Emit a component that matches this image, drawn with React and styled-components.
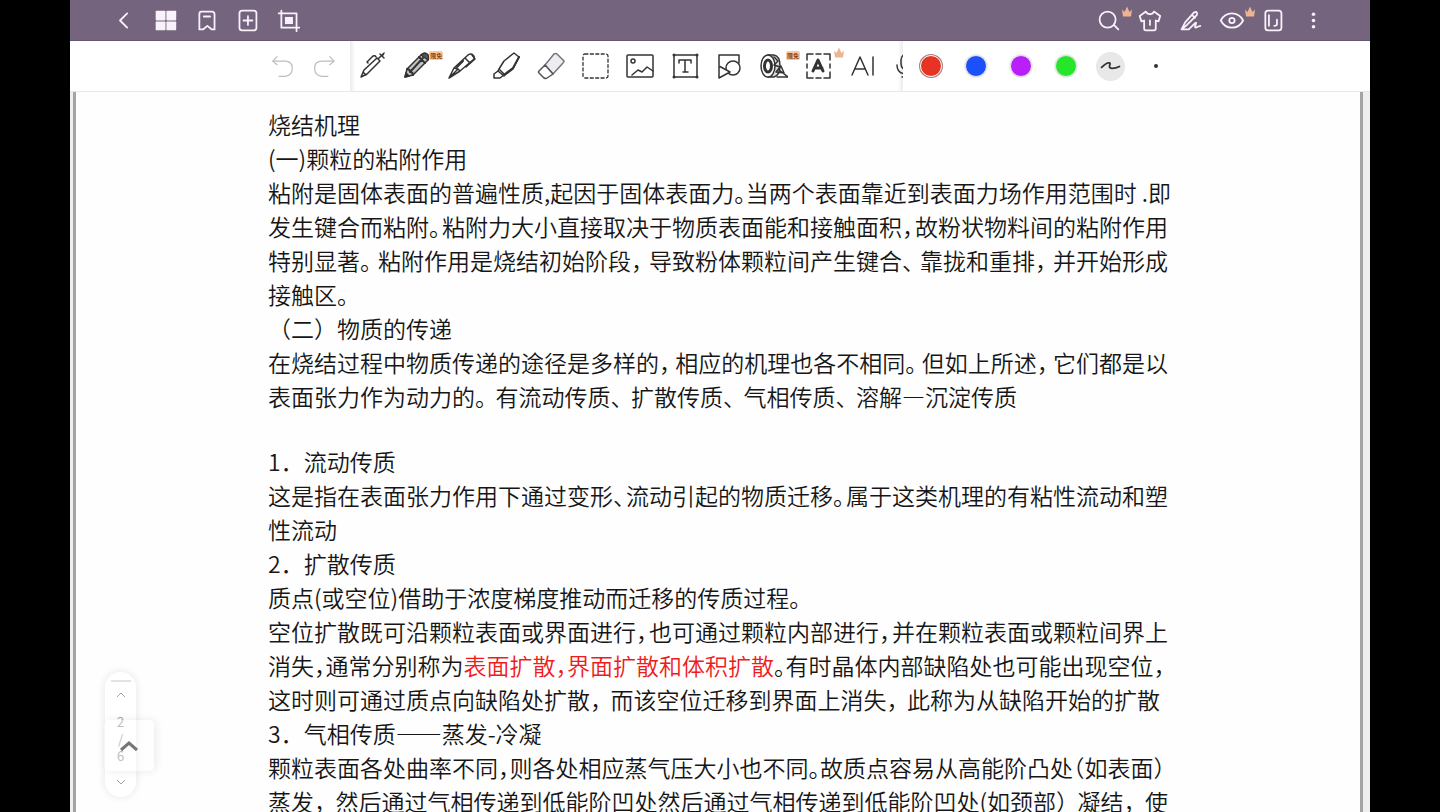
import React, { useState } from "react";
import styled, { createGlobalStyle } from "styled-components";

// *...* marks red text, fit tells how the slack after punctuation is used
const SECTIONS = [
  [
    { text: "烧结机理" },
    { text: "(一)颗粒的粘附作用" },
    { text: "粘附是固体表面的普遍性质,起因于固体表面力。当两个表面靠近到表面力场作用范围时 .即", fit: "full" },
    { text: "发生键合而粘附。粘附力大小直接取决于物质表面能和接触面积，故粉状物料间的粘附作用", fit: "full" },
    { text: "特别显著。粘附作用是烧结初始阶段，导致粉体颗粒间产生键合、靠拢和重排，并开始形成", fit: "full" },
    { text: "接触区。" },
    { text: "（二）物质的传递" },
    { text: "在烧结过程中物质传递的途径是多样的，相应的机理也各不相同。但如上所述，它们都是以", fit: "full" },
    { text: "表面张力作为动力的。有流动传质、扩散传质、气相传质、溶解—沉淀传质", fit: "loose" },
  ],
  [
    { text: "1．流动传质" },
    { text: "这是指在表面张力作用下通过变形、流动引起的物质迁移。属于这类机理的有粘性流动和塑", fit: "full" },
    { text: "性流动" },
    { text: "2．扩散传质" },
    { text: "质点(或空位)借助于浓度梯度推动而迁移的传质过程。" },
    { text: "空位扩散既可沿颗粒表面或界面进行，也可通过颗粒内部进行，并在颗粒表面或颗粒间界上", fit: "full" },
    { text: "消失，通常分别称为*表面扩散，**界面扩散和体积扩散*。有时晶体内部缺陷处也可能出现空位，", fit: "tight" },
    { text: "这时则可通过质点向缺陷处扩散，而该空位迁移到界面上消失，此称为从缺陷开始的扩散", fit: "loose" },
    { text: "3．气相传质——蒸发-冷凝" },
    { text: "颗粒表面各处曲率不同，则各处相应蒸气压大小也不同。故质点容易从高能阶凸处（如表面）", fit: "tight" },
    { text: "蒸发，然后通过气相传递到低能阶凹处然后通过气相传递到低能阶凹处(如颈部）凝结，使", fit: "full" },
  ],
];

const COLORS = [
  { name: "红色", value: "#e73323" },
  { name: "蓝色", value: "#1b50fb" },
  { name: "紫色", value: "#b81ffb" },
  { name: "绿色", value: "#26e52a" },
];

const Crown = () => (
  <CrownMark viewBox="0 0 12 11">
    <path d="M1 3.5 3.5 6 6 .5 8.5 6 11 3.5 10 10.5H2z" fill="#eeb48f" />
  </CrownMark>
);

const leftActions = [
  { label: "返回", icon: <path d="m17 6-8 8 8 8" /> },
  {
    label: "缩略图",
    icon: (
      <g fill="currentColor" stroke="none">
        <rect x="3" y="3" width="11" height="11" rx="1" />
        <rect x="15" y="3" width="11" height="11" rx="1" />
        <rect x="3" y="15" width="11" height="10" rx="1" />
        <rect x="15" y="15" width="11" height="10" rx="1" />
      </g>
    ),
  },
  { label: "书签", icon: <path d="M8 4h12q3 0 3 3v17h-3l-5-4-5 4H6V7q0-3 2-3zM11 9.500h7" /> },
  {
    label: "添加页面",
    icon: (
      <>
        <rect x="5" y="3" width="19" height="22" rx="3" />
        <path d="M14.500 9v10M9.500 14h10" />
      </>
    ),
  },
  {
    label: "裁剪",
    icon: (
      <>
        <path d="M3 6h20v20M6 3v19h20" />
        <rect x="10" y="10" width="9" height="8" fill="currentColor" stroke="none" />
      </>
    ),
  },
];

const rightActions = [
  {
    label: "搜索",
    crown: true,
    icon: (
      <>
        <circle cx="13" cy="13" r="9" />
        <path d="m20 19 5 5" />
      </>
    ),
  },
  {
    label: "主题",
    icon: (
      <>
        <path d="m10 4-7 5 2 6 3-1v9q0 2 2 2h9q2 0 2-2v-9l3 1 2-6-7-5q-1 3-4.500 3T10 4z" />
        <path d="M14.500 14v5" />
      </>
    ),
  },
  {
    label: "手写",
    icon: (
      <>
        <path d="M4 24 8 16 18 5q2-1 3 0t0 3L10 19l-6 5h8l6-6q3-3 2 0l-1 3q0 2 3 0l3-1" />
        <path d="m16 8 3 3" />
      </>
    ),
  },
  {
    label: "阅读模式",
    crown: true,
    icon: (
      <>
        <path d="M2 14q4-8 12.500-8T27 14q-4 8-12.500 8T2 14z" />
        <circle cx="14.500" cy="14" r="3" />
      </>
    ),
  },
  {
    label: "页面",
    icon: (
      <>
        <rect x="6" y="3" width="18" height="22" rx="3" />
        <path d="M10 8v12M19 13v5q0 2-3 2" />
      </>
    ),
  },
  {
    label: "更多",
    icon: (
      <g fill="currentColor" stroke="none">
        <circle cx="14" cy="7" r="2" />
        <circle cx="14" cy="14" r="2" />
        <circle cx="14" cy="21" r="2" />
      </g>
    ),
  },
];

const tools = [
  {
    label: "圆珠笔",
    icon: (
      <>
        <path d="m3 25 3-7L19 6l3 3L9 22zM5 20l3 3M10 11l-1-1 6-6q2-1 3 1M20 7l5-5M22 2l4 4M26 1l-1 2" />
      </>
    ),
  },
  {
    label: "铅笔",
    badge: "限免",
    icon: (
      <>
        <path d="m2 25 2-8L18 3q3-3 6-1t1 6L10 23z" fill="#c4c4c4" />
        <path d="M18 3q3-3 6-1t1 6z" fill="#555" />
        <path d="M4 17q3 0 3 3 3 0 3 3M7 20 20 6M16 5l6 6" strokeWidth="2" />
        <path d="m2 25 1-4 3 3z" fill="#222" />
      </>
    ),
  },
  {
    label: "钢笔",
    icon: (
      <>
        <path d="m1 26 5-10L20 3q3-2 5 0t1 4L12 19zM1 26l9-9M6 16l4 1 2 2M17 6l5 5" />
        <path d="m9 15 6-6" strokeWidth="2" />
        <path d="m18 15 9-8-3-4" />
      </>
    ),
  },
  {
    label: "荧光笔",
    icon: (
      <>
        <path d="m7 17 5-8L22 1l5 4-6 12-8 6zM7 17l-1 2 6 5 1-1M7 17l6 6" />
        <path d="m6 19-4 3v4h6l4-3" />
        <path d="m27 5-6 11-8 6" strokeWidth="2" />
      </>
    ),
  },
  {
    label: "橡皮擦",
    icon: (
      <>
        <path d="m8 13 9-11q2-1 3 0l6 6q2 1 0 3L16 22z" fill="#ececf1" stroke="#777" />
        <path d="m8 13-6 6q-1 1 0 2l5 5q2 1 3 0l6-4z" fill="#fff" stroke="#555" />
      </>
    ),
  },
  { label: "套索", icon: <rect x="2" y="2" width="25" height="24" rx="2" strokeWidth="1.3" strokeDasharray="3 2.400" /> },
  {
    label: "图片",
    icon: (
      <>
        <rect x="1" y="3" width="26" height="22" rx="1" />
        <circle cx="7" cy="9" r="2" />
        <path d="m6 23 6-5 4 2 5-5 6 4" />
      </>
    ),
  },
  {
    label: "文本",
    icon: (
      <>
        <path d="M3 3h23v22H3zM8 11V8h12v3M14 8v12M12 20h5" />
        <g fill="currentColor" stroke="none">
          <circle cx="3" cy="3" r="1.500" />
          <circle cx="26" cy="3" r="1.500" />
          <circle cx="3" cy="25" r="1.500" />
          <circle cx="26" cy="25" r="1.500" />
        </g>
      </>
    ),
  },
  {
    label: "形状",
    icon: (
      <>
        <path d="M4 13V3h20v8" />
        <circle cx="18" cy="16" r="7" />
        <path d="m4 14 11 6-11 6z" fill="#fff" />
      </>
    ),
  },
  {
    label: "胶带",
    badge: "限免",
    icon: (
      <>
        <path d="M8 3h6q6 1 6 11 0 9-6 11H8" fill="#ddd" />
        <ellipse cx="8" cy="14" rx="7" ry="11" fill="#fff" />
        <ellipse cx="8" cy="14" rx="3.500" ry="6" strokeWidth="3" />
        <path d="m14 5 4 4-4 4 6 2-4 5 8 1-3-7M19 18l9 7H17" />
      </>
    ),
  },
  {
    label: "文字识别",
    crown: true,
    icon: (
      <>
        <path d="M3 8V2h6M12 2h5M20 2h6v6M3 12v4M26 12v4M3 20v6h6M12 26h5M20 26h6v-6" />
        <path d="m9 19 5-11 5 11M11 16h7" strokeWidth="3" />
      </>
    ),
  },
  { label: "AI", icon: <path d="m3 23 8-18 8 18M6 17h10M24 5v18" /> },
  {
    label: "录音",
    icon: (
      <>
        <rect x="7" y="2" width="12" height="16" rx="6" />
        <path d="M3 13q0 9 10 9t10-9M13 22v3M8 25h10" />
      </>
    ),
  },
];

const PUNCTUATION = /(?<=[,，。、）])/;

const Line = ({ text, fit }) => {
  const parts = text.split("*");
  return (
    <Row $fit={fit}>
      {parts.map((part, i) =>
        part
          ? part.split(PUNCTUATION).map((piece, j) => (
              <Piece key={`${i}-${j}`} $red={i % 2 === 1}>
                {piece}
              </Piece>
            ))
          : null
      )}
    </Row>
  );
};

const App = () => {
  const [color, setColor] = useState("红色");
  const [page, setPage] = useState(2);

  return (
    <Desk>
      <GlobalStyle />
      <Reader>
        <Header>
          <Actions>
            {leftActions.map(({ label, icon }) => (
              <ActionButton key={label} aria-label={label}>
                <Icon viewBox="0 0 28 28">{icon}</Icon>
              </ActionButton>
            ))}
          </Actions>
          <Actions>
            {rightActions.map(({ label, icon, crown }) => (
              <ActionButton key={label} aria-label={label}>
                <Icon viewBox="0 0 28 28">{icon}</Icon>
                {crown && <Crown />}
              </ActionButton>
            ))}
          </Actions>
        </Header>
        <Toolbar>
          <History>
            <HistoryButton aria-label="撤销">
              <Icon viewBox="0 0 28 28" $thin>
                <path d="m8 3-5 5 5 4M3 8h14q8 0 8 8t-8 9h-7" />
              </Icon>
            </HistoryButton>
            <HistoryButton aria-label="重做">
              <Icon viewBox="0 0 28 28" $thin>
                <path d="m21 3 5 5-5 4M26 8H12q-8 0-8 8t8 9h7" />
              </Icon>
            </HistoryButton>
          </History>
          <Tools>
            <ToolRow>
              {tools.map(({ label, icon, badge, crown }) => (
                <ToolButton key={label} aria-label={label}>
                  <ToolIcon viewBox="0 0 28 28">{icon}</ToolIcon>
                  {badge && <Badge>{badge}</Badge>}
                  {crown && <Crown />}
                </ToolButton>
              ))}
            </ToolRow>
          </Tools>
          <Palette>
            {COLORS.map(({ name, value }) => (
              <PaletteButton key={name} aria-label={name} onClick={() => setColor(name)}>
                <Swatch $color={value} $active={name === color} />
              </PaletteButton>
            ))}
            <PaletteButton aria-label="线条样式">
              <Stroke>
                <Icon viewBox="0 0 28 28">
                  <path d="M4 15q6-6 9-5 1 0 0 3t3 3q4 0 8-2" />
                </Icon>
              </Stroke>
            </PaletteButton>
            <PaletteButton aria-label="粗细">
              <Dot />
            </PaletteButton>
          </Palette>
        </Toolbar>
        <Canvas>
          <Paper>
            <Article lang="zh-CN">
              {SECTIONS.map((lines, i) => (
                <section key={i}>
                  {lines.map((line) => (
                    <Line key={line.text} {...line} />
                  ))}
                </section>
              ))}
            </Article>
          </Paper>
        </Canvas>
        <Pager>
          <Grip />
          <PagerButton aria-label="上一页" onClick={() => setPage(Math.max(1, page - 1))}>
            <Chevron viewBox="0 0 10 6">
              <path d="m1 5 4-4 4 4" />
            </Chevron>
          </PagerButton>
          <Pages>
            <span>{page}</span>
            <span>/</span>
            <span>6</span>
          </Pages>
          <PagerButton aria-label="下一页" onClick={() => setPage(Math.min(6, page + 1))}>
            <Chevron viewBox="0 0 10 6">
              <path d="m1 1 4 4 4-4" />
            </Chevron>
          </PagerButton>
        </Pager>
        <Expand aria-label="展开">
          <svg width="18" height="12" viewBox="0 0 18 12" fill="none" stroke="#777" strokeWidth="3">
            <path d="m1 10 8-7 8 7" />
          </svg>
        </Expand>
      </Reader>
    </Desk>
  );
};

export default App;

const GlobalStyle = createGlobalStyle`
  * {
    box-sizing: border-box;
  }
  body {
    margin: 0;
    background: #000;
    font-family: "Noto Sans CJK SC", sans-serif;
  }
  button {
    padding: 0;
    border: 0;
    background: none;
    color: inherit;
    font: inherit;
    cursor: pointer;
  }
`;

const Desk = styled.div`
  height: 100vh;
  padding: 0 70px;
  background: #000;
  overflow: hidden;
`;

const Reader = styled.div`
  position: relative;
  height: 100%;
  display: flex;
  flex-direction: column;
  background: #fff;
  overflow: hidden;
`;

const Header = styled.header`
  flex: none;
  height: 41px;
  padding: 0 36px 0 34px;
  display: flex;
  justify-content: space-between;
  background: #75647d;
  border-bottom: 1px solid #67566f;
  color: #f8f2fb;
`;

const Actions = styled.div`
  display: flex;
`;

const ActionButton = styled.button`
  position: relative;
  width: 41px;
  height: 40px;
  display: flex;
  align-items: center;
  justify-content: center;
`;

const Icon = styled.svg`
  width: 25px;
  height: 25px;
  fill: none;
  stroke: currentColor;
  stroke-width: ${({ $thin }) => ($thin ? 1.3 : 2)};
  stroke-linecap: round;
  stroke-linejoin: round;
`;

const CrownMark = styled.svg`
  position: absolute;
  top: 6px;
  right: -4px;
  width: 12px;
  height: 11px;
`;

const Toolbar = styled.div`
  flex: none;
  height: 51px;
  display: flex;
  background: #fff;
  border-bottom: 1px solid #e8e8e8;
`;

const History = styled.div`
  width: 280px;
  padding-right: 6px;
  display: flex;
  justify-content: flex-end;
  align-items: center;
  color: #bdbdbd;
`;

const HistoryButton = styled.button`
  width: 41px;
  height: 40px;
  display: flex;
  align-items: center;
  justify-content: center;
`;

const Tools = styled.div`
  flex: 1;
  min-width: 0;
  overflow: hidden;
  box-shadow: inset 5px 0 3px -2px #eee, inset -5px 0 3px -2px #eee;
`;

const ToolRow = styled.div`
  width: calc(100% + 27px);
  height: 50px;
  display: flex;
  color: #333;
`;

const ToolButton = styled.button`
  position: relative;
  flex: 1;
  display: flex;
  align-items: center;
  justify-content: center;
`;

const ToolIcon = styled(Icon)`
  width: 28px;
  height: 28px;
  stroke-width: 1.5;
`;

const Badge = styled.span`
  position: absolute;
  top: 10px;
  right: -4px;
  padding: 0 1px;
  border-radius: 2px;
  background: #fbc9a0;
  color: #8a3f0c;
  font-size: 6px;
  font-weight: 700;
  line-height: 9px;
`;

const Palette = styled.div`
  width: 467px;
  padding-left: 5px;
  display: flex;
  align-items: center;
`;

const PaletteButton = styled.button`
  width: 45px;
  height: 50px;
  display: flex;
  align-items: center;
  justify-content: center;
`;

const Swatch = styled.span`
  width: 22px;
  height: 22px;
  border: 1px solid ${({ $active }) => ($active ? "#fff" : "#e6e6e6")};
  border-radius: 50%;
  background: ${({ $color }) => $color};
  box-shadow: 0 0 0 1px ${({ $active }) => ($active ? "#a97f7b" : "#ededed")};
`;

const Stroke = styled.span`
  width: 29px;
  height: 29px;
  display: flex;
  align-items: center;
  justify-content: center;
  border-radius: 50%;
  background: #e8e8e8;
  color: #333;
`;

const Dot = styled.span`
  width: 4px;
  height: 4px;
  border-radius: 50%;
  background: #333;
`;

const Canvas = styled.main`
  flex: 1;
  min-height: 0;
  padding: 0 7px 0 3px;
  background: #eee;
  overflow: hidden;
`;

const Paper = styled.div`
  min-height: 100%;
  padding-top: 15px;
  background: #fefefe;
  border: solid #a4a4a4;
  border-width: 0 3px;
`;

const Article = styled.article`
  max-width: 900px;
  margin: 0 auto;
  display: flex;
  flex-direction: column;
  gap: 31px;
  color: #161616;
  font-size: 23px;
  font-weight: 350;
  line-height: 34px;
`;

const Row = styled.div`
  display: flex;
  justify-content: ${({ $fit }) => ($fit === "full" ? "space-between" : "flex-start")};
  gap: ${({ $fit }) => ($fit === "loose" ? "9px" : "0")};
  font-feature-settings: ${({ $fit }) => ($fit ? '"halt"' : "normal")};
  white-space: nowrap;
`;

const Piece = styled.span`
  color: ${({ $red }) => ($red ? "#ee1c1c" : "inherit")};
`;

const Pager = styled.nav`
  position: absolute;
  left: 35px;
  bottom: 15px;
  width: 31px;
  height: 125px;
  padding: 8px 0 2px;
  display: flex;
  flex-direction: column;
  align-items: center;
  border-radius: 16px;
  background: #fff;
  box-shadow: 0 0 8px rgba(0, 0, 0, 0.1);
  color: #a4a4a4;
`;

const Grip = styled.span`
  width: 20px;
  height: 2px;
  background: #e2e2e2;
`;

const PagerButton = styled.button`
  width: 31px;
  height: 26px;
  display: flex;
  align-items: center;
  justify-content: center;
`;

const Chevron = styled.svg`
  width: 10px;
  height: 6px;
  fill: none;
  stroke: currentColor;
`;

const Pages = styled.div`
  flex: 1;
  display: flex;
  flex-direction: column;
  justify-content: center;
  align-items: center;
  font-size: 13px;
  line-height: 17px;
`;

const Expand = styled.button`
  position: absolute;
  left: 34px;
  bottom: 41px;
  width: 50px;
  height: 51px;
  display: flex;
  align-items: center;
  justify-content: center;
  border-radius: 5px;
  background: rgba(255, 255, 255, 0.3);
  box-shadow: 2px 0 8px rgba(0, 0, 0, 0.08);
`;
